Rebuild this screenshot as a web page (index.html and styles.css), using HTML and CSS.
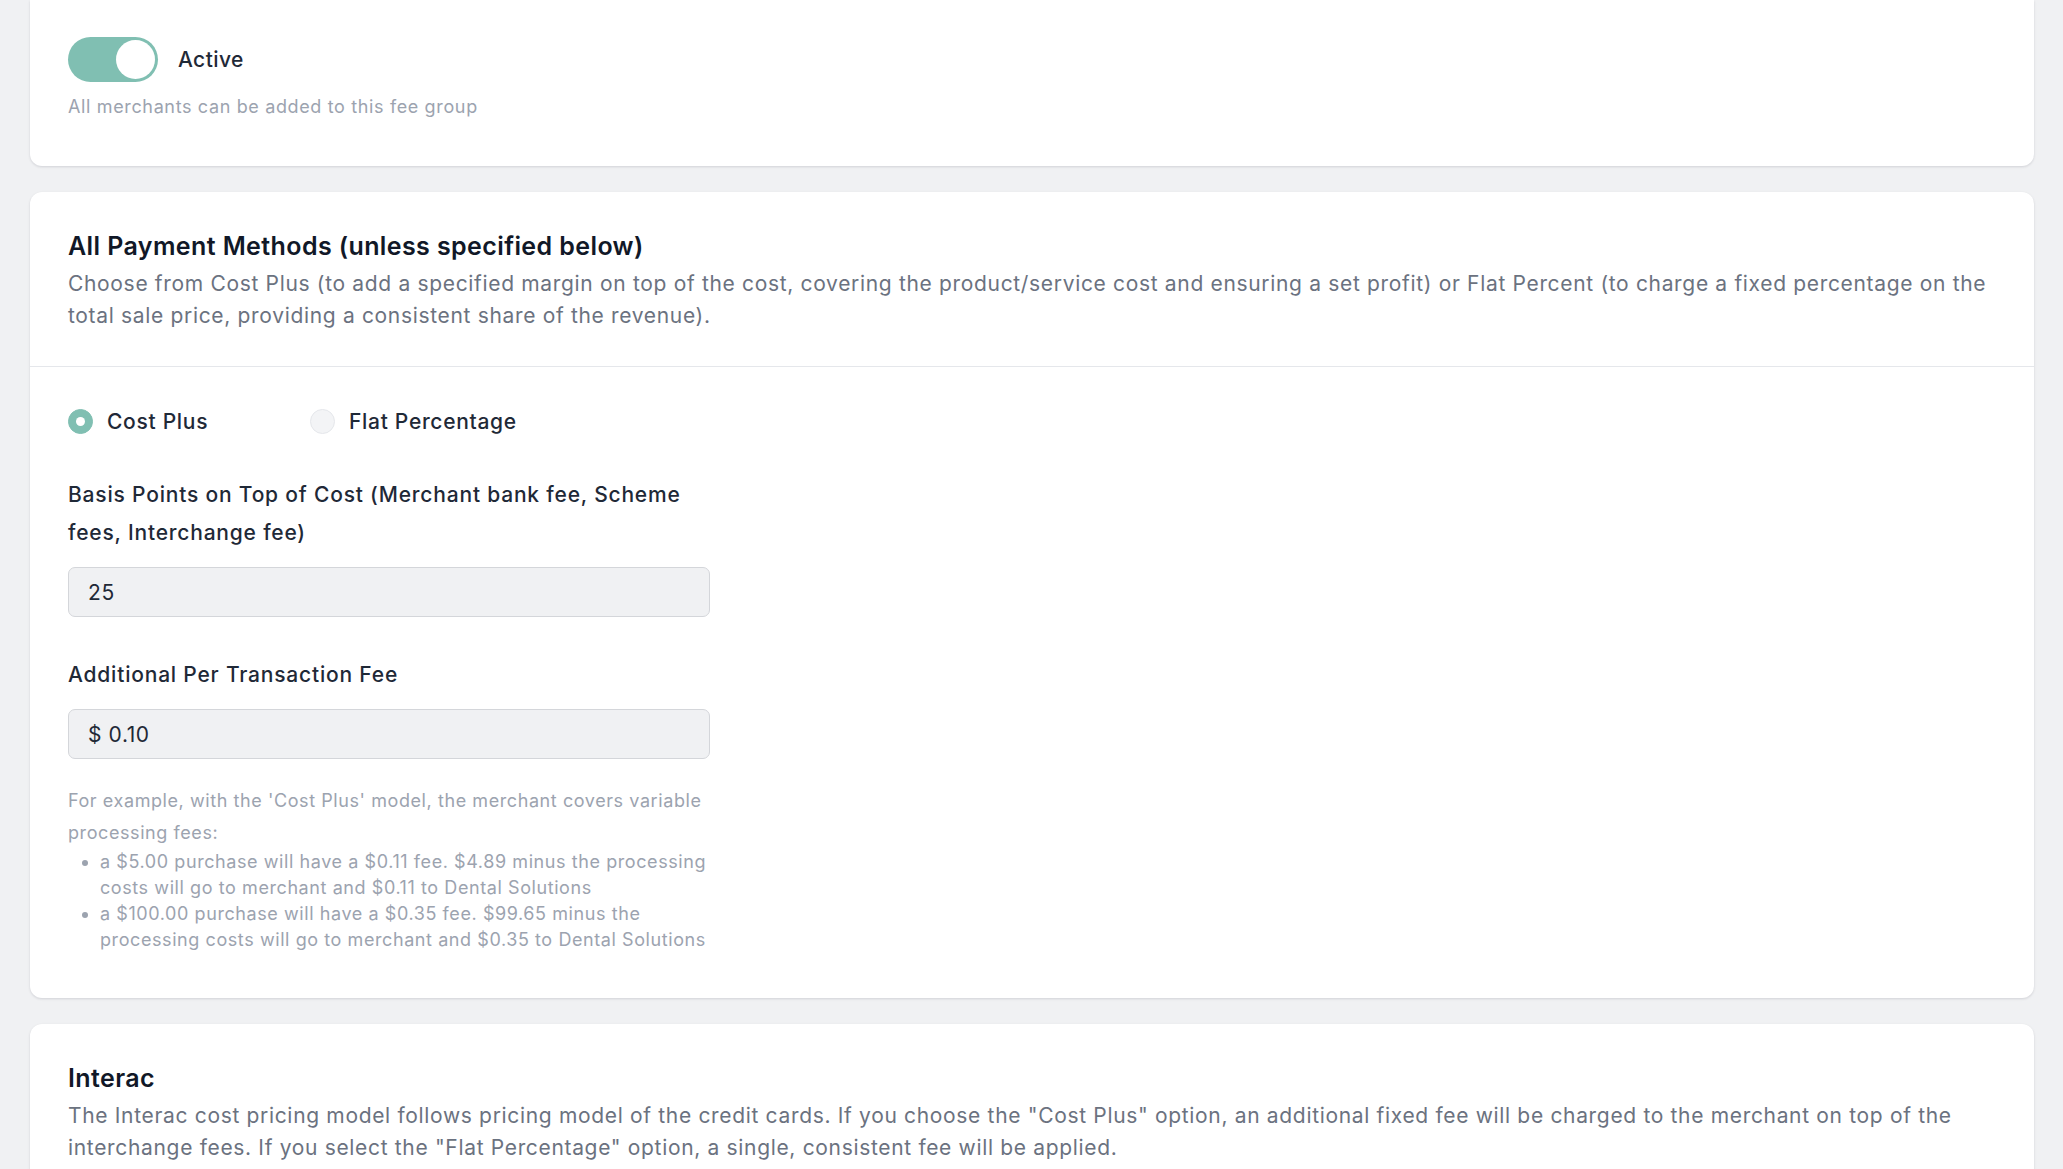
FILE: index.html
```html
<!DOCTYPE html>
<html lang="en">
<head>
<meta charset="utf-8">
<title>Fee group</title>
<link rel="stylesheet" href="styles.css">
</head>
<body>
<main class="page">
  <section class="card card-top">
    <div class="toggle-row">
      <span class="toggle"><span class="knob"></span></span>
      <span class="toggle-label">Active</span>
    </div>
    <p class="hint">All merchants can be added to this fee group</p>
  </section>

  <section class="card">
    <header class="card-head">
      <h2 class="title">All Payment Methods (unless specified below)</h2>
      <p class="desc">Choose from Cost Plus (to add a specified margin on top of the cost, covering the product/service cost and ensuring a set profit) or Flat Percent (to charge a fixed percentage on the total sale price, providing a consistent share of the revenue).</p>
    </header>
    <div class="card-body">
      <div class="radios">
        <label class="radio"><span class="dot checked"></span><span>Cost Plus</span></label>
        <label class="radio"><span class="dot"></span><span>Flat Percentage</span></label>
      </div>
      <div class="form-col">
        <div class="field">
          <div class="label">Basis Points on Top of Cost (Merchant bank fee, Scheme fees, Interchange fee)</div>
          <div class="input">25</div>
        </div>
        <div class="field">
          <div class="label">Additional Per Transaction Fee</div>
          <div class="input">$ 0.10</div>
        </div>
        <div class="help">
          <p class="help-lead">For example, with the 'Cost Plus' model, the merchant covers variable processing fees:</p>
          <ul class="help-list">
            <li>a $5.00 purchase will have a $0.11 fee. $4.89 minus the processing costs will go to merchant and $0.11 to Dental Solutions</li>
            <li>a $100.00 purchase will have a $0.35 fee. $99.65 minus the processing costs will go to merchant and $0.35 to Dental Solutions</li>
          </ul>
        </div>
      </div>
    </div>
  </section>

  <section class="card">
    <header class="card-head">
      <h2 class="title">Interac</h2>
      <p class="desc">The Interac cost pricing model follows pricing model of the credit cards. If you choose the "Cost Plus" option, an additional fixed fee will be charged to the merchant on top of the interchange fees. If you select the "Flat Percentage" option, a single, consistent fee will be applied.</p>
    </header>
  </section>
</main>
</body>
</html>
```

FILE: styles.css
```css
* { box-sizing: border-box; }
html, body {
  margin: 0;
  padding: 0;
  background: #f0f1f3;
  height: 1169px;
  overflow: hidden;
}
body {
  font-family: Inter, "Noto Sans", "Liberation Sans", sans-serif;
  color: #1f2937;
}
.page {
  display: flex;
  flex-direction: column;
  gap: 26px;
  padding: 0 29px 0 30px;
}
.card {
  background: #ffffff;
  border-radius: 12px;
  box-shadow: 0 1px 3px rgba(17, 24, 39, 0.10), 0 1px 2px rgba(17, 24, 39, 0.04);
}
.card-top {
  border-top-left-radius: 0;
  border-top-right-radius: 0;
  padding: 37px 38px 47px;
}
.toggle-row {
  display: flex;
  align-items: center;
  gap: 20px;
}
.toggle {
  width: 90px;
  height: 45px;
  border-radius: 23px;
  background: #80bfb2;
  display: flex;
  align-items: center;
  justify-content: flex-end;
  padding: 3px;
}
.knob {
  width: 39px;
  height: 39px;
  border-radius: 50%;
  background: #ffffff;
}
.toggle-label {
  font-size: 21px;
  font-weight: 500;
  letter-spacing: 0.4px;
  color: #1f2937;
}
.hint {
  margin: 13px 0 0;
  font-size: 18px;
  line-height: 24px;
  letter-spacing: 0.64px;
  color: #9ca3af;
}
.card-head {
  padding: 38px 38px 34px;
  border-bottom: 1px solid #e5e7eb;
}
.card:last-child .card-head { border-bottom: none; }
.title {
  margin: 0;
  font-size: 25px;
  line-height: 32px;
  font-weight: 600;
  letter-spacing: 0.4px;
  color: #111827;
}
.desc {
  margin: 6px 0 0;
  font-size: 21px;
  line-height: 32px;
  letter-spacing: 0.67px;
  color: #6b7280;
}
.card-body {
  padding: 38px 38px 45px;
}
.radios {
  display: flex;
  align-items: center;
  height: 32px;
}
.radio {
  display: flex;
  align-items: center;
  gap: 14px;
  font-size: 21px;
  font-weight: 500;
  letter-spacing: 0.7px;
  color: #1f2937;
}
.radio:first-child { width: 242px; }
.dot {
  width: 25px;
  height: 25px;
  border-radius: 50%;
  background: #f3f4f6;
  border: 1px solid #e5e7eb;
  display: flex;
  align-items: center;
  justify-content: center;
}
.dot.checked {
  background: #80bfb2;
  border-color: #80bfb2;
}
.dot.checked::after {
  content: "";
  width: 9px;
  height: 9px;
  border-radius: 50%;
  background: #ffffff;
}
.form-col {
  width: 642px;
  margin-top: 39px;
  display: flex;
  flex-direction: column;
  gap: 39px;
}
.field {
  display: flex;
  flex-direction: column;
  gap: 15px;
}
.label {
  font-size: 21px;
  line-height: 38px;
  font-weight: 500;
  letter-spacing: 0.8px;
  color: #1f2937;
}
.input {
  height: 50px;
  border: 1px solid #d4d6da;
  border-radius: 7px;
  background: #f0f1f3;
  padding: 0 19px;
  display: flex;
  align-items: center;
  font-size: 21px;
  letter-spacing: 0.6px;
  color: #1f2937;
}
.help {
  margin-top: -13px;
  color: #9ca3af;
  font-size: 18px;
  width: 656px;
}
.help-lead {
  margin: 0;
  line-height: 32px;
  letter-spacing: 0.58px;
}
.help-list {
  margin: 0;
  padding-left: 32px;
  line-height: 26px;
  letter-spacing: 0.58px;
}
.help-list li { padding-left: 0; }
```
